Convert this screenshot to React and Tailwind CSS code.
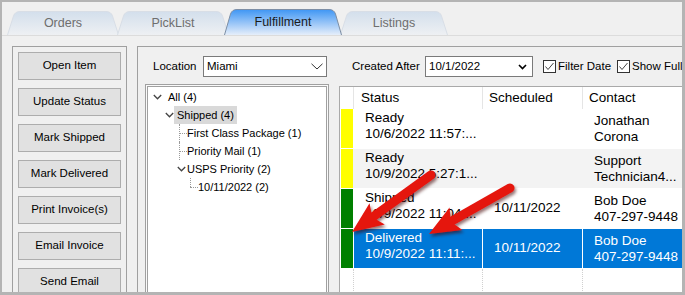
import React from "react";

const tabs = [
  { label: "Orders", w: 112, cls: "w-[112px] h-[24px]" },
  { label: "PickList", w: 112, cls: "w-[112px] h-[24px] -ml-[2px]" },
  { label: "Fulfillment", w: 118, cls: "w-[118px] h-[26px] -ml-[5px] z-10", active: true },
  { label: "Listings", w: 108, cls: "w-[108px] h-[24px] -ml-[2px]" },
];

const buttons = [
  "Open Item",
  "Update Status",
  "Mark Shipped",
  "Mark Delivered",
  "Print Invoice(s)",
  "Email Invoice",
  "Send Email",
];

const rows = [
  { color: "bg-[#ffff00]", status: "Ready", date: "10/6/2022 11:57:...", sched: "", c1: "Jonathan", c2: "Corona", bg: "bg-white", sep: "border-white", text: "text-black" },
  { color: "bg-[#ffff00]", status: "Ready", date: "10/9/2022 5:27:1...", sched: "", c1: "Support", c2: "Technician4...", bg: "bg-[#f3f3f3]", sep: "border-[#f3f3f3]", text: "text-black" },
  { color: "bg-[#008000]", status: "Shipped", date: "10/9/2022 11:04:...", sched: "10/11/2022", c1: "Bob Doe", c2: "407-297-9448", bg: "bg-white", sep: "border-white", text: "text-black" },
  { color: "bg-[#008000]", status: "Delivered", date: "10/9/2022 11:11:...", sched: "10/11/2022", c1: "Bob Doe", c2: "407-297-9448", bg: "bg-[#0078d7]", sep: "border-white", text: "text-white" },
];

function Tab({ label, w, cls, active }) {
  const h = active ? 26 : 24;
  const id = "grad" + label;
  const d = `M0.5 ${h} L6.5 5 Q8 0.5 13 0.5 L${w - 13} 0.5 Q${w - 8} 0.5 ${w - 6.5} 5 L${w - 0.5} ${h}`;
  return (
    <div className={`relative flex items-center justify-center shrink-0 ${cls}`}>
      <svg className="absolute left-0 top-0" width={w} height={h}>
        <defs>
          <linearGradient id={id} x1="0" y1="0" x2="0" y2="1">
            <stop offset="0" stopColor={active ? "#3f96f4" : "#d3dfec"} />
            <stop offset="1" stopColor={active ? "#e6eefa" : "#eef0f3"} />
          </linearGradient>
        </defs>
        <path d={d} fill={`url(#${id})`} stroke={active ? "#7d8ea5" : "#d8dee6"} strokeWidth="1" />
      </svg>
      <span className={`relative mt-[1px] text-[12.5px] ${active ? "text-[#1b1b1b]" : "text-[#6e6e6e]"}`}>
        {label}
      </span>
    </div>
  );
}

function Chevron({ className }) {
  return (
    <svg className={className} width="9" height="6" viewBox="0 0 9 6">
      <polyline points="0.8,1 4.5,4.8 8.2,1" fill="none" stroke="#444" strokeWidth="1.3" />
    </svg>
  );
}

function Check() {
  return (
    <div className="w-[13px] h-[13px] border border-[#333] bg-white shrink-0">
      <svg width="11" height="11" viewBox="0 0 11 11">
        <polyline points="1.5,5.5 4,8.5 9.5,2" fill="none" stroke="#444" strokeWidth="1" />
      </svg>
    </div>
  );
}

function Dots({ full, half }) {
  return (
    <div className="relative w-[8px] h-[18px] shrink-0">
      {full && <div className="absolute left-0 top-0 h-full border-l border-dotted border-[#9a9a9a]" />}
      {half && <div className="absolute left-0 top-0 h-[9px] border-l border-dotted border-[#9a9a9a]" />}
      <div className="absolute left-0 top-[9px] w-full border-t border-dotted border-[#9a9a9a]" />
    </div>
  );
}

function Arrow({ tail, tip, shaft }) {
  const [tx, ty] = tail;
  const [px, py] = tip;
  const dx = px - tx;
  const dy = py - ty;
  const len = Math.hypot(dx, dy);
  const ux = dx / len;
  const uy = dy / len;
  const nx = -uy;
  const ny = ux;
  const bx = px - 31 * ux;
  const by = py - 31 * uy;
  const kx = px - 25 * ux;
  const ky = py - 25 * uy;
  const head = `${px},${py} ${bx + 13 * nx},${by + 13 * ny} ${kx},${ky} ${bx - 13 * nx},${by - 13 * ny}`;
  return (
    <g filter="url(#arrowShadow)">
      <line x1={tx} y1={ty} x2={kx} y2={ky} stroke="#e5140f" strokeWidth={shaft} strokeLinecap="round" />
      <polygon points={head} fill="#e5140f" />
    </g>
  );
}

export default function App() {
  return (
    <div className="relative w-[685px] h-[295px] overflow-hidden bg-[#f0f0f0] border-t-2 border-l-2 border-r-[3px] border-b-[3px] border-[#b4b4b4] font-['Liberation_Sans',Arial,sans-serif] text-black">
      <div className="flex items-end h-[34px] pl-[5px] border-b border-[#dcdcdc]">
        {tabs.map((t) => (
          <Tab key={t.label} {...t} />
        ))}
      </div>

      <div className="flex pt-[10px] pl-[10px]">
        <div className="w-[115px] h-[260px] shrink-0 border border-[#a0a0a0] px-[5px] pt-[5px] flex flex-col gap-[8px]">
          {buttons.map((b) => (
            <div
              key={b}
              className="h-[28px] shrink-0 border border-[#adadad] bg-[#e1e1e1] flex items-center justify-center text-[11.5px]"
            >
              {b}
            </div>
          ))}
        </div>

        <div className="ml-[10px] w-[600px] h-[260px] shrink-0 border border-[#a0a0a0]">
          <div className="flex items-center h-[21px] mt-[9px] pl-[15px] text-[11.5px] whitespace-nowrap">
            <span className="w-[50px] shrink-0">Location</span>
            <div className="w-[124px] h-[21px] shrink-0 border border-[#7a7a7a] bg-white flex items-center justify-between pl-[3px] pr-[3px]">
              <span>Miami</span>
              <svg width="12" height="7" viewBox="0 0 12 7">
                <polyline points="0.5,0.8 6,6 11.5,0.8" fill="none" stroke="#333" strokeWidth="1" />
              </svg>
            </div>
            <span className="ml-[25px] w-[73px] shrink-0">Created After</span>
            <div className="w-[108px] h-[21px] shrink-0 border border-[#7a7a7a] bg-white flex items-center justify-between pl-[3px] pr-[5px]">
              <span>10/1/2022</span>
              <svg width="9" height="6" viewBox="0 0 9 6">
                <polyline points="1,1 4.5,4.6 8,1" fill="none" stroke="#000" strokeWidth="1.6" />
              </svg>
            </div>
            <div className="ml-[10px]">
              <Check />
            </div>
            <span className="ml-[2px] w-[57px] shrink-0">Filter Date</span>
            <div className="ml-[2px]">
              <Check />
            </div>
            <span className="ml-[2px]">Show Full</span>
          </div>

          <div className="flex mt-[7px] pl-[7px]">
            <div className="w-[184px] h-[215px] shrink-0 border border-[#a0a0a0] p-px bg-[#fafafa]">
              <div className="h-full border border-[#a0a0a0] bg-white pt-px text-[11px] whitespace-nowrap">
                <div className="flex items-center h-[18px] pl-[5px]">
                  <div className="w-[15px]">
                    <Chevron />
                  </div>
                  <span>All (4)</span>
                </div>
                <div className="flex items-center h-[18px] pl-[17px]">
                  <div className="w-[9px]">
                    <Chevron />
                  </div>
                  <span className="h-full flex items-center px-[3px] bg-[#d9d9d9]">Shipped (4)</span>
                </div>
                <div className="pl-[31px]">
                  <div className="flex items-center h-[18px]">
                    <Dots full />
                    <span>First Class Package (1)</span>
                  </div>
                  <div className="flex items-center h-[18px]">
                    <Dots full />
                    <span>Priority Mail (1)</span>
                  </div>
                  <div className="flex items-center h-[18px]">
                    <div className="w-[8px] -ml-[2px] mr-[2px]">
                      <Chevron />
                    </div>
                    <span>USPS Priority (2)</span>
                  </div>
                  <div className="flex items-center h-[18px] pl-[11px]">
                    <Dots half />
                    <span>10/11/2022 (2)</span>
                  </div>
                </div>
              </div>
            </div>

            <div className="ml-[10px] mt-[2px] w-[400px] h-[215px] shrink-0 border-l border-t border-[#a9a9a9] bg-white text-[13.5px] whitespace-nowrap">
              <div className="flex h-[22px]">
                <div className="w-[13px] shrink-0" />
                <div className="w-[129px] shrink-0 border-l border-[#e5e5e5] pl-[7px] flex items-center">Status</div>
                <div className="w-[100px] shrink-0 border-l border-[#e5e5e5] pl-[6px] flex items-center">Scheduled</div>
                <div className="flex-1 border-l border-[#e5e5e5] pl-[6px] flex items-center">Contact</div>
              </div>

              {rows.map((r, i) => (
                <div key={i} className="flex h-[40px] border-b border-white">
                  <div className="w-[13px] shrink-0 pl-px">
                    <div className={`h-full ${r.color}`} />
                  </div>
                  <div className={`w-[129px] shrink-0 border-l ${r.sep} ${r.bg} ${r.text} pl-[11px] pt-px leading-[16px]`}>
                    <div>{r.status}</div>
                    <div>{r.date}</div>
                  </div>
                  <div className={`w-[100px] shrink-0 border-l ${r.sep} ${r.bg} ${r.text} pl-[11px] flex items-center`}>
                    {r.sched}
                  </div>
                  <div className={`flex-1 border-l ${r.sep} ${r.bg} ${r.text} pl-[11px] flex flex-col justify-center leading-[16px]`}>
                    <div>{r.c1}</div>
                    <div>{r.c2}</div>
                  </div>
                </div>
              ))}

              <div className="flex h-[30px]">
                <div className="w-[13px] shrink-0" />
                <div className="w-[129px] shrink-0 border-l border-dotted border-[#d0d0d0]" />
                <div className="w-[100px] shrink-0 border-l border-dotted border-[#d0d0d0]" />
                <div className="flex-1 border-l border-dotted border-[#d0d0d0]" />
              </div>
            </div>
          </div>
        </div>
      </div>

      <svg className="absolute -left-[2px] -top-[2px] pointer-events-none" width="685" height="295">
        <defs>
          <filter id="arrowShadow" x="-20%" y="-20%" width="140%" height="140%">
            <feDropShadow dx="1.5" dy="2.5" stdDeviation="1.5" floodColor="#400000" floodOpacity="0.55" />
          </filter>
        </defs>
        <Arrow tail={[431, 175]} tip={[352, 232]} shaft={9} />
        <Arrow tail={[510, 188]} tip={[429, 234]} shaft={9} />
      </svg>
    </div>
  );
}
